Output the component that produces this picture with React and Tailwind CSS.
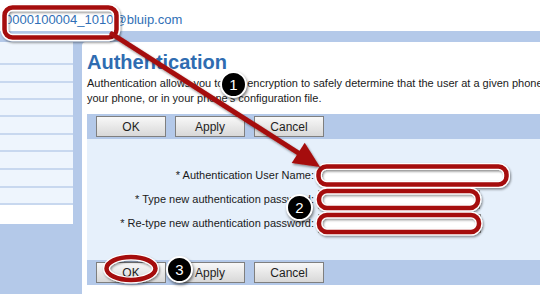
import React from "react";

function Btn({ children }) {
  return (
    <div className="w-[70px] h-[21px] flex items-center justify-center border border-[#7f7f7f] bg-linear-to-b from-[#f8f8f8] to-[#d8d8d8] text-[12px] leading-[14px] text-[#1e1e1e]">
      {children}
    </div>
  );
}

function ButtonBar() {
  return (
    <div className="h-[25px] bg-[#b4c9e9] flex items-center pl-[9px] gap-[9px]">
      <Btn>OK</Btn>
      <Btn>Apply</Btn>
      <Btn>Cancel</Btn>
    </div>
  );
}

function Row({ label, w }) {
  return (
    <div className="h-[24px] flex items-center">
      <div className="w-[227px] text-right text-[11px] leading-[14px] text-[#1a1a1a] whitespace-nowrap">{label}</div>
      <div className="ml-[4px] h-[19px] border border-[#8c8c8c] bg-white" style={{ width: w }} />
    </div>
  );
}

const rows = [23, 18, 17, 17, 18, 17, 18, 18, 17];

export default function App() {
  return (
    <div className="w-[540px] h-[294px] relative overflow-hidden bg-white font-['Liberation_Sans',Arial,sans-serif]">
      <div className="h-[31px] pt-[12px] pl-[5px] text-[13px] leading-[15px] text-[#2f6fb6] whitespace-nowrap">
        0000100004_1010@bluip.com
      </div>
      <div className="flex h-[263px] bg-[#b4c9e9] pt-[11px]">
        <div className="w-[73px] flex flex-col">
          {rows.map((h, i) => (
            <div key={i} className="bg-[#eef5fd] border-b-2 border-[#c8d8ef]" style={{ height: h }} />
          ))}
          <div className="h-[19px] bg-white" />
        </div>
        <div className="w-[9px]" />
        <div className="flex-1 bg-white rounded-tl-[4px] pl-[5px] pt-[9px] overflow-hidden">
          <div className="text-[20px] leading-[23px] font-bold text-[#2f6cb1] whitespace-nowrap">Authentication</div>
          <div className="mt-[2px] text-[11px] leading-[15px] text-[#1a1a1a] whitespace-nowrap">
            <div>Authentication allows you to use encryption to safely determine that the user at a given phone</div>
            <div>your phone, or in your phone's configuration file.</div>
          </div>
          <div className="mt-[8px]">
            <ButtonBar />
          </div>
          <div className="h-[121px] bg-[#e6f0fb] pt-[24px]">
            <Row label="* Authentication User Name:" w={187} />
            <Row label="* Type new authentication password:" w={162} />
            <Row label="* Re-type new authentication password:" w={163} />
          </div>
          <ButtonBar />
        </div>
      </div>

      <svg className="absolute inset-0 pointer-events-none" width="540" height="294" viewBox="0 0 540 294">
        <defs>
          <filter id="sh" x="-20%" y="-20%" width="140%" height="140%">
            <feDropShadow dx="1" dy="1.5" stdDeviation="1.3" floodColor="#000" floodOpacity="0.45" />
          </filter>
        </defs>
        <g filter="url(#sh)" fill="none" strokeLinejoin="round" strokeLinecap="round">
          <rect x="4.5" y="7.5" width="112" height="30" rx="8" stroke="#fff" strokeWidth="7.5" />
          <rect x="4.5" y="7.5" width="112" height="30" rx="8" stroke="#a50b0b" strokeWidth="4.5" />
          <rect x="318.5" y="166.5" width="188" height="18" rx="8" stroke="#fff" strokeWidth="7" />
          <rect x="318.5" y="166.5" width="188" height="18" rx="8" stroke="#a50b0b" strokeWidth="4.5" />
          <rect x="319" y="191" width="159" height="17" rx="8" stroke="#fff" strokeWidth="7" />
          <rect x="319" y="191" width="159" height="17" rx="8" stroke="#a50b0b" strokeWidth="4.5" />
          <rect x="319" y="215" width="160" height="17" rx="8" stroke="#fff" strokeWidth="7" />
          <rect x="319" y="215" width="160" height="17" rx="8" stroke="#a50b0b" strokeWidth="4.5" />
          <ellipse cx="131" cy="268.5" rx="24.5" ry="11.5" stroke="#fff" strokeWidth="7" />
          <ellipse cx="131" cy="268.5" rx="24.5" ry="11.5" stroke="#a50b0b" strokeWidth="4.5" />
        </g>
        <g filter="url(#sh)">
          <line x1="112" y1="34" x2="300" y2="154" stroke="#a50b0b" strokeWidth="5" strokeLinecap="round" />
          <polygon points="320,167 291.7,163 304.7,142.8" fill="#a50b0b" />
        </g>
      </svg>

      {[
        ["1", 220, 71],
        ["2", 286, 194],
        ["3", 166, 256],
      ].map(([n, l, t]) => (
        <div
          key={n}
          className="absolute w-[27px] h-[27px] rounded-full bg-black border-2 border-white shadow-[1px_2px_3px_rgba(0,0,0,0.5)] flex items-center justify-center text-white text-[15px] leading-[15px]"
          style={{ left: l, top: t }}
        >
          {n}
        </div>
      ))}
    </div>
  );
}
